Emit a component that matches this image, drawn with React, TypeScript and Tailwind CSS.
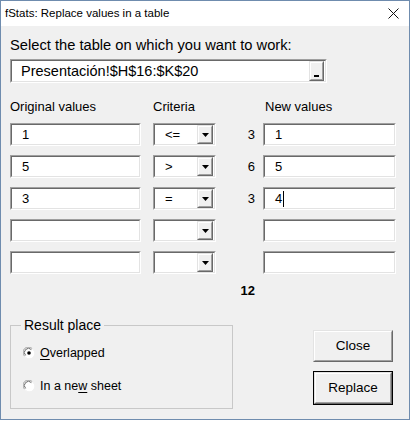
import type { ReactNode } from 'react'

interface Row {
    original: string
    criteria: string
    count: string
    value: string
    caret?: boolean
}

const rows: Row[] = [
    { original: '1', criteria: '<=', count: '3', value: '1' },
    { original: '5', criteria: '>', count: '6', value: '5' },
    { original: '3', criteria: '=', count: '3', value: '4', caret: true },
    { original: '', criteria: '', count: '', value: '' },
    { original: '', criteria: '', count: '', value: '' },
]

// classic 3d sunken edit box
const Sunken = ({ className, children }: { className?: string; children?: ReactNode }) => (
    <div
        className={`border border-t-[#a0a0a0] border-l-[#a0a0a0] border-r-white border-b-white ${className ?? ''}`}
    >
        <div className="flex h-full items-center border border-t-[#696969] border-l-[#696969] border-r-[#e3e3e3] border-b-[#e3e3e3] bg-white">
            {children}
        </div>
    </div>
)

const Raised = ({ className, children }: { className?: string; children?: ReactNode }) => (
    <div
        className={`border border-t-[#e3e3e3] border-l-[#e3e3e3] border-r-[#696969] border-b-[#696969] ${className ?? ''}`}
    >
        <div className="flex h-full items-center justify-center border border-t-white border-l-white border-r-[#a0a0a0] border-b-[#a0a0a0] bg-[#f0f0f0]">
            {children}
        </div>
    </div>
)

const Radio = ({ checked }: { checked?: boolean }) => (
    <svg width="12" height="12" viewBox="0 0 12 12" className="shrink-0">
        <circle cx="6" cy="6" r="5.5" fill="#ffffff" />
        <path d="M1.6 9.2 A5 5 0 0 1 9.2 1.6" stroke="#a0a0a0" strokeWidth="1" fill="none" />
        <path d="M2.6 8.4 A3.8 3.8 0 0 1 8.4 2.6" stroke="#696969" strokeWidth="1" fill="none" />
        <path d="M10.4 2.8 A5 5 0 0 1 2.8 10.4" stroke="#f0f0f0" strokeWidth="1" fill="none" />
        {checked && <circle cx="6" cy="6" r="1.8" fill="#000000" />}
    </svg>
)

const Combo = ({ value }: { value: string }) => (
    <Sunken className="h-[23px] w-[63px]">
        <span className="flex-1 pl-[10px] text-[13px] leading-none text-black">{value}</span>
        <Raised className="mr-px h-[19px] w-[16px]">
            <svg width="7" height="4" viewBox="0 0 7 4">
                <path d="M0 0 H7 L3.5 4 Z" fill="#000000" />
            </svg>
        </Raised>
    </Sunken>
)

export default function App() {
    return (
        <div
            className="h-[421px] w-[410px] bg-white"
            style={{ fontFamily: '"Liberation Sans", Arial, sans-serif' }}
        >
            <div className="flex h-[420px] w-[410px] flex-col border border-[#6f8cae]">
                {/* title bar */}
                <div className="flex h-[25px] items-center justify-between bg-white pl-[4px] pr-[10px]">
                    <span className="text-[11.5px] text-black">fStats: Replace values in a table</span>
                    <svg width="11" height="11" viewBox="0 0 11 11">
                        <path d="M0.5 0.5 L10.5 10.5 M10.5 0.5 L0.5 10.5" stroke="#111111" strokeWidth="1" />
                    </svg>
                </div>

                <div className="flex flex-1 flex-col bg-[#f0f0f0] pl-[9px] pt-[10px]">
                    <p className="text-[14.7px] leading-[18px] text-black">
                        Select the table on which you want to work:
                    </p>

                    <Sunken className="mt-[5px] h-[24px] w-[317px]">
                        <span className="flex-1 pl-[9px] text-[14.5px] leading-none text-black">
                            Presentación!$H$16:$K$20
                        </span>
                        <Raised className="mr-px h-[20px] w-[15px]">
                            <span className="mt-[10px] h-[2px] w-[5px] bg-black" />
                        </Raised>
                    </Sunken>

                    <div className="mt-[16px] flex text-[13px] leading-[16px] text-black">
                        <span className="w-[143px]">Original values</span>
                        <span className="w-[111px]">Criteria</span>
                        <span className="pl-[1px]">New values</span>
                    </div>

                    <div className="mt-[8px] flex flex-col gap-[9px]">
                        {rows.map((row, i) => (
                            <div key={i} className="flex items-center">
                                <Sunken className="h-[23px] w-[131px]">
                                    <span className="pl-[10px] text-[13px] leading-none text-black">
                                        {row.original}
                                    </span>
                                </Sunken>
                                <div className="ml-[12px]">
                                    <Combo value={row.criteria} />
                                </div>
                                <span className="w-[47px] pr-[8px] text-right text-[13px] text-black">
                                    {row.count}
                                </span>
                                <Sunken className="h-[23px] w-[133px]">
                                    <span className="pl-[10px] text-[13px] leading-none text-black">
                                        {row.value}
                                    </span>
                                    {row.caret && <span className="ml-px h-[16px] w-px bg-black" />}
                                </Sunken>
                            </div>
                        ))}
                    </div>

                    <div className="mt-[9px] flex">
                        <span className="ml-[206px] w-[47px] pr-[8px] text-right text-[13px] font-bold leading-[16px] text-black">
                            12
                        </span>
                    </div>

                    <div className="mt-[18px] flex items-start">
                        <fieldset className="h-[92px] w-[223px] border border-[#c8c8c8] px-[10px]">
                            <legend className="px-[3px] text-[14px] leading-[16px] text-black">
                                Result place
                            </legend>
                            <div className="mt-[11px] flex items-center gap-[5px] pl-[2px] text-[12.5px] text-black">
                                <Radio checked />
                                <span>
                                    <span className="underline underline-offset-2">O</span>verlapped
                                </span>
                            </div>
                            <div className="mt-[14px] flex items-center gap-[5px] pl-[2px] text-[12.5px] text-black">
                                <Radio />
                                <span>
                                    In a ne<span className="underline underline-offset-2">w</span> sheet
                                </span>
                            </div>
                        </fieldset>

                        <div className="ml-[80px] mt-[13px] flex flex-col gap-[9px]">
                            <Raised className="h-[32px] w-[80px]">
                                <span className="text-[13.5px] text-black">Close</span>
                            </Raised>
                            <div className="border border-black">
                                <Raised className="h-[32px] w-[78px]">
                                    <span className="text-[13.5px] text-black">Replace</span>
                                </Raised>
                            </div>
                        </div>
                    </div>
                </div>
            </div>
        </div>
    )
}
